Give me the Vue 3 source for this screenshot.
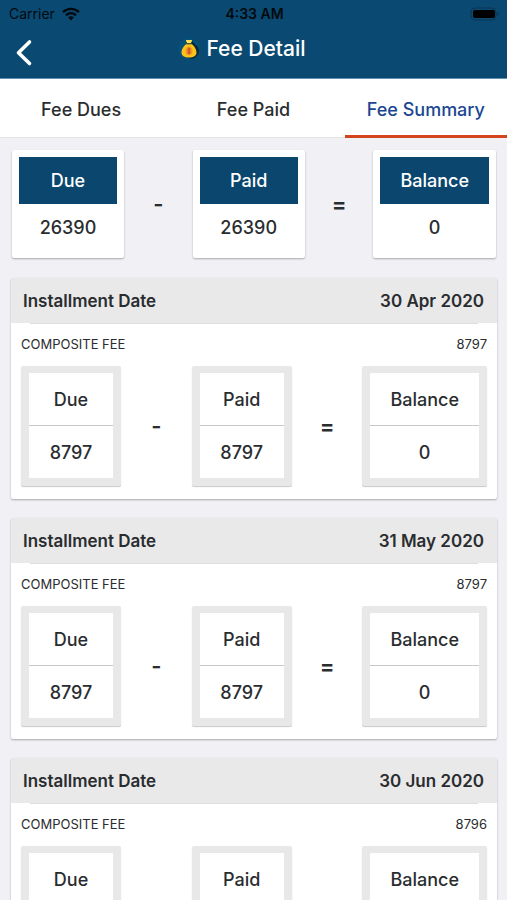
<script setup>
import { ref } from 'vue'

const tabs = ['Fee Dues', 'Fee Paid', 'Fee Summary']
const active = ref('Fee Summary')

const totals = [
  { label: 'Due', value: 26390, op: '-' },
  { label: 'Paid', value: 26390, op: '=' },
  { label: 'Balance', value: 0 }
]

const installment = (date, amount) => ({
  date,
  amount,
  boxes: [
    { label: 'Due', value: amount, op: '-' },
    { label: 'Paid', value: amount, op: '=' },
    { label: 'Balance', value: 0 }
  ]
})

const installments = [
  installment('30 Apr 2020', 8797),
  installment('31 May 2020', 8797),
  installment('30 Jun 2020', 8796)
]
</script>

<template>
  <div class="screen">
    <header class="header">
      <div class="status">
        <span class="carrier">
          Carrier
          <svg width="18" height="14" viewBox="0 0 18 14" aria-hidden="true">
            <g fill="none" stroke="#03090e" stroke-width="2.4">
              <path d="M1 5.2C5.5.8 12.500.8 17 5.200" />
              <path d="M4 8.300C6.900 5.500 11.100 5.500 14 8.300" />
            </g>
            <path d="M6.200 10.400C7.800 8.900 10.200 8.900 11.800 10.400L9 13.400Z" fill="#03090e" />
          </svg>
        </span>
        <span class="time">4:33 AM</span>
        <span class="battery">
          <svg width="30" height="14" viewBox="0 0 30 14" aria-hidden="true">
            <rect x="1" y="1" width="25" height="12" rx="4" fill="none" stroke="#063553" stroke-width="1" />
            <rect x="3" y="3" width="22" height="8" rx="2" fill="#000" />
            <path d="M27.500 5Q29 5.500 29 7T27.500 9Z" fill="#063553" />
          </svg>
        </span>
      </div>
      <div class="bar">
        <button class="back" type="button" aria-label="Back">
          <svg width="18" height="28" viewBox="0 0 18 28" aria-hidden="true">
            <path d="M14.500 3L3.500 13.700L14.500 24.500" fill="none" stroke="#fff" stroke-width="3.600" stroke-linecap="round" stroke-linejoin="round" />
          </svg>
        </button>
        <h1 class="title">
          <svg width="24" height="24" viewBox="0 0 24 24" aria-hidden="true">
            <circle cx="12" cy="12" r="11" fill="#075077" />
            <path d="M14 3L21 10C24 15 20 21 14 22L7 19Z" fill="#06283d" />
            <path d="M9 3H15L13.800 6.500C17 8.500 19.500 12 19.500 15.500C19.500 19 16.500 20.500 12 20.500S4.500 19 4.500 15.500C4.500 12 7 8.500 10.200 6.500Z" fill="#fcc419" />
            <path d="M9 3H15L13.800 6H10.200Z" fill="#ffe35b" />
            <rect x="9.500" y="6" width="5" height="1.400" fill="#3c5a35" />
            <ellipse cx="12" cy="14" rx="3.500" ry="4.200" fill="#f39325" />
            <path d="M13.500 12.200C11.500 11 10 12.800 12 13.800S13.300 16.700 10.600 15.700M12 10.800V17.200" fill="none" stroke="#bd4b2c" stroke-width="1" />
          </svg>
          Fee Detail
        </h1>
      </div>
    </header>

    <nav class="tabs">
      <button
        v-for="tab in tabs"
        :key="tab"
        type="button"
        class="tab"
        :class="{ active: tab === active }"
        @click="active = tab"
      >{{ tab }}</button>
    </nav>

    <main class="content">
      <section class="equation totals">
        <template v-for="t in totals" :key="t.label">
          <div class="total">
            <div class="total-label">{{ t.label }}</div>
            <div class="total-value">{{ t.value }}</div>
          </div>
          <span v-if="t.op" class="op">{{ t.op }}</span>
        </template>
      </section>

      <article v-for="i in installments" :key="i.date" class="card">
        <h2 class="card-head"><span>Installment Date</span><span>{{ i.date }}</span></h2>
        <div class="card-body">
          <div class="fee"><span>COMPOSITE FEE</span><span>{{ i.amount }}</span></div>
          <div class="equation">
            <template v-for="b in i.boxes" :key="b.label">
              <div class="box">
                <div class="cell">{{ b.label }}</div>
                <div class="cell">{{ b.value }}</div>
              </div>
              <span v-if="b.op" class="op">{{ b.op }}</span>
            </template>
          </div>
        </div>
      </article>
    </main>
  </div>
</template>

<style>
body {
  margin: 0;
  background: #f0f0f5;
}
</style>

<style scoped>
.screen {
  min-height: 100vh;
  background: #f0f0f5;
  color: #2a2d2f;
  font-family: Inter, "Liberation Sans", sans-serif;
  font-size: 18px;
  font-weight: 500;
  line-height: 24px;
}
.header {
  background: #0a4a72;
  border-bottom: 1px solid #5f93b3;
}
.status {
  display: grid;
  grid-template-columns: 1fr auto 1fr;
  align-items: center;
  height: 28px;
  padding: 0 7px 0 9px;
  color: #03090e;
  font-size: 14px;
}
.carrier {
  display: flex;
  align-items: center;
  gap: 7px;
  font-weight: 400;
}
.time {
  font-weight: 600;
}
.battery {
  display: flex;
  justify-content: flex-end;
}
.bar {
  display: grid;
  grid-template-columns: 48px 1fr 72px;
  height: 50px;
}
.back {
  display: flex;
  align-items: center;
  justify-content: center;
  padding: 0;
  border: 0;
  background: none;
}
.title {
  display: flex;
  align-items: center;
  justify-content: center;
  gap: 5px;
  margin: 0;
  padding-bottom: 8px;
  color: #fff;
  font-size: 21px;
  font-weight: 500;
}
.tabs {
  display: flex;
  justify-content: space-between;
  background: #fff;
  border-bottom: 1px solid #e2e2e4;
}
.tab {
  width: 32%;
  height: 59px;
  margin-bottom: -1px;
  padding: 5px 0 0;
  border: 0;
  border-bottom: 3px solid transparent;
  background: none;
  color: inherit;
  font: inherit;
}
.tab.active {
  border-color: #d2441d;
  color: #1c4692;
}
.content {
  padding: 12px 10px 20px 11px;
}
.equation {
  display: flex;
  align-items: center;
  justify-content: space-between;
}
.totals {
  margin: 0 1px 20px;
}
.total {
  min-width: 98px;
  padding: 7px;
  background: #fff;
  border-radius: 2px;
  box-shadow: 0 1px 2px #0000004d;
  text-align: center;
}
.total-label {
  padding: 12px 20px 11px;
  background: #0a466e;
  color: #fff;
}
.total-value {
  padding: 12px 20px 11px;
}
.op {
  width: 16px;
  font-size: 22px;
  font-weight: 600;
  text-align: center;
}
.card {
  margin-bottom: 19px;
  background: #fff;
  border-radius: 2px;
  box-shadow: 0 1px 2px #0000004d;
}
.card-head {
  display: flex;
  justify-content: space-between;
  margin: 0;
  padding: 11px 13px 10px 12px;
  background: #e9e9e9;
  font-size: 17px;
  font-weight: 600;
}
.card-body {
  padding: 0 10px 13px;
}
.card-body::before {
  content: "";
  display: block;
  height: 1px;
  margin: 0 9px;
  background: #dedede;
}
.fee {
  display: flex;
  justify-content: space-between;
  padding: 10px 0 12px;
  font-size: 13px;
  font-weight: 400;
  line-height: 20px;
}
.box {
  min-width: 84px;
  padding: 7px 8px 8px;
  background: #e8e8e8;
  border-radius: 2px;
  box-shadow: 0 1px 1px #00000038;
  text-align: center;
}
.cell {
  padding: 15px 20px 13px;
  background: #fff;
}
.cell + .cell {
  border-top: 1px solid #c8c8c8;
}
</style>
